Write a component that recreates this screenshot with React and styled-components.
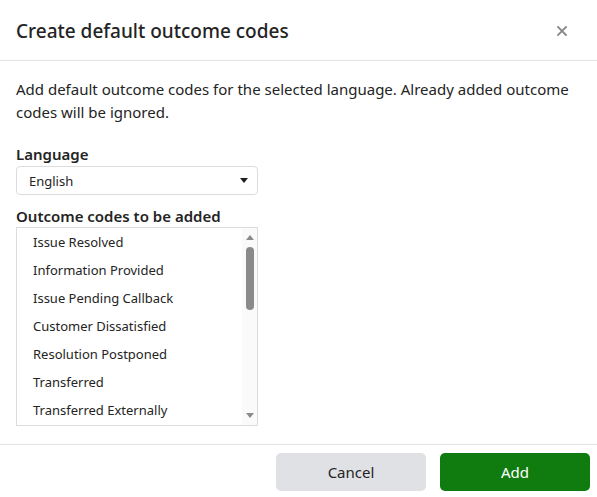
import React from "react";
import styled, { createGlobalStyle } from "styled-components";

const Global = createGlobalStyle`
  html, body {
    margin: 0;
    padding: 0;
    background: #fff;
  }
  body {
    font-family: "Noto Sans", "Open Sans", sans-serif;
    color: #212121;
  }
`;

const Dialog = styled.div`
  width: 597px;
  height: 497px;
  display: flex;
  flex-direction: column;
  background: #fff;
  overflow: hidden;
`;

const Header = styled.div`
  height: 61px;
  box-sizing: border-box;
  border-bottom: 1px solid #e3e3e3;
  display: flex;
  align-items: center;
  justify-content: space-between;
  padding: 2px 29px 0 16px;
`;

const Title = styled.h2`
  margin: 0;
  font-size: 19px;
  font-weight: 500;
  color: #242424;
`;

const CloseButton = styled.button`
  border: none;
  background: none;
  padding: 0;
  width: 12px;
  height: 12px;
  display: flex;
  align-items: center;
  justify-content: center;
  cursor: pointer;
`;

const Body = styled.div`
  flex: 1;
  padding: 17px 16px 0 16px;
  display: flex;
  flex-direction: column;
`;

const Intro = styled.p`
  margin: 0 0 20px 0;
  font-size: 15px;
  line-height: 23px;
  color: #242424;
`;

const Label = styled.label`
  display: block;
  font-size: 15px;
  font-weight: 600;
  line-height: 20px;
  color: #242424;
  margin-bottom: ${(p) => p.$gap ?? 2}px;
`;

const Select = styled.div`
  width: 242px;
  height: 29px;
  box-sizing: border-box;
  border: 1px solid #dcdcdc;
  border-radius: 4px;
  display: flex;
  align-items: center;
  justify-content: space-between;
  padding: 0 9px 0 12px;
  font-size: 13px;
  color: #242424;
  margin-bottom: 11px;
`;

const ListBox = styled.div`
  width: 242px;
  height: 199px;
  box-sizing: border-box;
  border: 1px solid #dcdcdc;
  display: flex;
`;

const Items = styled.ul`
  list-style: none;
  margin: 0;
  padding: 0;
  flex: 1;
  overflow: hidden;
`;

const Item = styled.li`
  height: 28px;
  line-height: 28px;
  padding-left: 16px;
  font-size: 13px;
  color: #242424;
  white-space: nowrap;
`;

const Track = styled.div`
  width: 15px;
  background: #fafafa;
  display: flex;
  flex-direction: column;
  align-items: center;
  padding: 7px 0 7px;
  box-sizing: border-box;
`;

const Arrow = styled.div`
  width: 0;
  height: 0;
  border-left: 4px solid transparent;
  border-right: 4px solid transparent;
  ${(p) =>
    p.$down
      ? `border-top: 5px solid ${p.$dark ? "#1f1f1f" : "#8a8a8a"};`
      : "border-bottom: 5px solid #8a8a8a;"}
`;

const Thumb = styled.div`
  width: 8px;
  height: 63px;
  border-radius: 4px;
  background: #8a8a8a;
  margin-top: 7px;
`;

const Spacer = styled.div`
  flex: 1;
`;

const Footer = styled.div`
  height: 53px;
  border-top: 1px solid #e3e3e3;
  box-sizing: border-box;
  display: flex;
  justify-content: flex-end;
  align-items: flex-start;
  gap: 14px;
  padding: 8px 7px 0 0;
`;

const Button = styled.button`
  width: 150px;
  height: 38px;
  border: none;
  border-radius: 5px;
  font-family: inherit;
  font-size: 15px;
  cursor: pointer;
  background: ${(p) => (p.$primary ? "#107c10" : "#dfe1e5")};
  color: ${(p) => (p.$primary ? "#fff" : "#242424")};
`;

const codes = [
  "Issue Resolved",
  "Information Provided",
  "Issue Pending Callback",
  "Customer Dissatisfied",
  "Resolution Postponed",
  "Transferred",
  "Transferred Externally",
];

export default function App() {
  return (
    <>
      <Global />
      <Dialog>
        <Header>
          <Title>Create default outcome codes</Title>
          <CloseButton aria-label="Close">
            <svg width="10" height="10" viewBox="0 0 10 10">
              <path
                d="M1 1 L9 9 M9 1 L1 9"
                stroke="#888"
                strokeWidth="1.8"
                strokeLinecap="square"
              />
            </svg>
          </CloseButton>
        </Header>
        <Body>
          <Intro>
            Add default outcome codes for the selected language. Already added
            outcome codes will be ignored.
          </Intro>
          <Label>Language</Label>
          <Select>
            <span>English</span>
            <Arrow $down $dark />
          </Select>
          <Label $gap={1}>Outcome codes to be added</Label>
          <ListBox>
            <Items>
              {codes.map((c) => (
                <Item key={c}>{c}</Item>
              ))}
            </Items>
            <Track>
              <Arrow />
              <Thumb />
              <Spacer />
              <Arrow $down />
            </Track>
          </ListBox>
        </Body>
        <Footer>
          <Button>Cancel</Button>
          <Button $primary>Add</Button>
        </Footer>
      </Dialog>
    </>
  );
}
